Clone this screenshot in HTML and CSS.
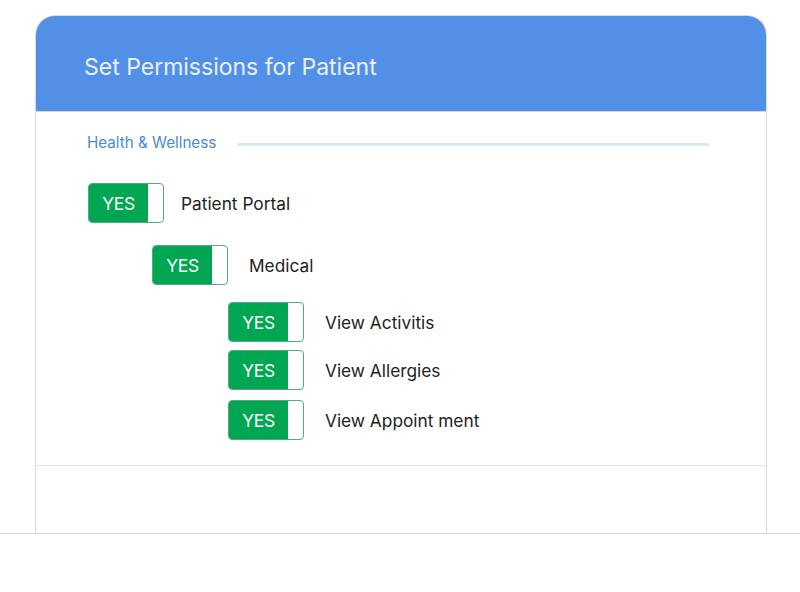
FILE: index.html
```html
<!DOCTYPE html>
<html lang="en">
<head>
<meta charset="utf-8">
<title>Set Permissions for Patient</title>
<link rel="stylesheet" href="styles.css">
</head>
<body>
<div class="page">
  <div class="card">
    <div class="card-header">
      <h1 class="card-title">Set Permissions for Patient</h1>
    </div>
    <div class="card-body">
      <div class="section-head">
        <span class="section-title">Health &amp; Wellness</span>
        <span class="section-rule"></span>
      </div>
      <div class="row lvl0 r1">
        <div class="toggle"><span class="toggle-on">YES</span></div>
        <span class="label">Patient Portal</span>
      </div>
      <div class="row lvl1 r2">
        <div class="toggle"><span class="toggle-on">YES</span></div>
        <span class="label">Medical</span>
      </div>
      <div class="row lvl2 r3">
        <div class="toggle"><span class="toggle-on">YES</span></div>
        <span class="label">View Activitis</span>
      </div>
      <div class="row lvl2 r4">
        <div class="toggle"><span class="toggle-on">YES</span></div>
        <span class="label">View Allergies</span>
      </div>
      <div class="row lvl2 r5">
        <div class="toggle"><span class="toggle-on">YES</span></div>
        <span class="label">View Appoint ment</span>
      </div>
    </div>
    <div class="card-footer"></div>
  </div>
  <div class="floor"></div>
</div>
</body>
</html>
```

FILE: styles.css
```css
* { box-sizing: border-box; }
html, body { margin: 0; padding: 0; background: #ffffff; }
body { font-family: Inter, "Noto Sans", "DejaVu Sans", sans-serif; color: #222222; }

.page { padding-top: 15px; }

.card {
  margin-left: 35px;
  width: 732px;
  border: 1px solid #dadada;
  border-bottom: none;
  border-radius: 20px 20px 0 0;
  overflow: hidden;
  background: #ffffff;
}

.card-header {
  height: 96px;
  background: #528fe7;
  border-bottom: 1px solid #d3dae4;
  display: flex;
  align-items: center;
  padding-left: 48px;
  padding-top: 7px;
}

.card-title {
  margin: 0;
  font-size: 23px;
  font-weight: 400;
  color: #eaf1fb;
  letter-spacing: 0;
}

.card-body {
  display: flex;
  flex-direction: column;
  padding: 20px 0 25px 0;
  border-bottom: 1px solid #e2e2e2;
}

.section-head {
  display: flex;
  align-items: center;
  height: 20px;
  padding-left: 51px;
}

.section-title {
  font-size: 15.2px;
  color: #4a8ad4;
  width: 150px;
}

.section-rule {
  width: 472px;
  height: 3px;
  background: #dde6f0;
  margin-top: 5px;
}

.row {
  display: flex;
  align-items: center;
  height: 40px;
}
.lvl0 { padding-left: 52px; }
.lvl0 .label { margin-left: 17px; }
.lvl1 { padding-left: 116px; }
.lvl2 { padding-left: 192px; }
.r1 { margin-top: 31px; }
.r2 { margin-top: 22px; }
.r3 { margin-top: 17px; }
.r4 { margin-top: 8px; }
.r5 { margin-top: 10px; }

.toggle {
  width: 76px;
  height: 40px;
  border: 1px solid #55a883;
  border-radius: 4px;
  background: #ffffff;
  overflow: hidden;
  display: flex;
}

.toggle-on {
  width: 59px;
  background: #00a651;
  color: #ffffff;
  font-size: 17.5px;
  display: flex;
  align-items: center;
  justify-content: center;
  letter-spacing: -0.4px;
}

.label {
  margin-left: 21px;
  font-size: 17.3px;
  color: #222222;
}

.card-footer { height: 67px; }

.floor {
  border-top: 1px solid #d6d6d6;
  height: 0;
}
```
